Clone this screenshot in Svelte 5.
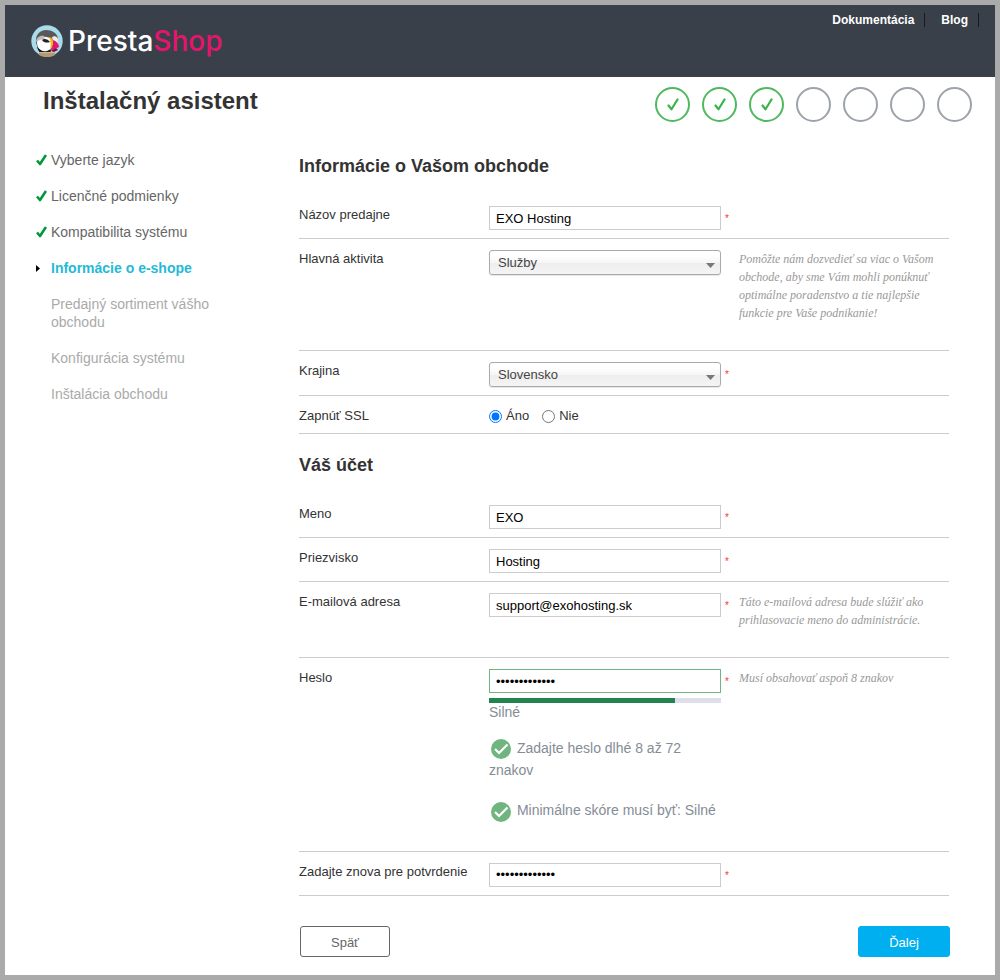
<script>
  const steps = [
    { label: 'Vyberte jazyk', state: 'done' },
    { label: 'Licenčné podmienky', state: 'done' },
    { label: 'Kompatibilita systému', state: 'done' },
    { label: 'Informácie o e-shope', state: 'current' },
    { label: 'Predajný sortiment vášho obchodu', state: 'todo' },
    { label: 'Konfigurácia systému', state: 'todo' },
    { label: 'Inštalácia obchodu', state: 'todo' }
  ];
  const rules = ['Zadajte heslo dlhé 8 až 72 znakov', 'Minimálne skóre musí byť: Silné'];

  let shop = $state('EXO Hosting');
  let ssl = $state('yes');
  let first = $state('EXO');
  let last = $state('Hosting');
  let email = $state('support@exohosting.sk');
  let password = $state('exohosting123');
  let confirmation = $state('exohosting123');
  let strength = $state(80);
</script>

{#snippet dropdown(id, value)}
  <div class="select">
    <select {id}><option>{value}</option></select>
    <svg width="9" height="5" viewBox="0 0 9 5" aria-hidden="true"><path d="M0 0h9L4.500 5z" fill="#777" /></svg>
  </div>
{/snippet}

<div class="page">
  <header>
    <a class="logo" href="#home">
      <svg width="32" height="32" viewBox="0 0 32 32" aria-hidden="true">
        <circle cx="16" cy="16" r="15.700" fill="#a9dbea" />
        <path d="M5 18C4 10 9 5 15 5c6 0 11 3 12 8l-4 6-4 9H9z" fill="#595959" />
        <path d="M6 17c1-4 5-6 9-5 4 0 6 3 6 7 0 5-3 9-7 9-5-1-8-6-8-11z" fill="#fff" />
        <path d="M5 17c0-4 4-7 8-6l1 3c-3 0-6 1-9 3z" fill="#bdbdbd" />
        <path d="M11 15c2-2 6-1 8 2-3 1-6 1-8-2z" fill="#202226" />
        <path d="M6 21c2 4 6 6 10 5l4-2-1 4H10c-2-1-4-4-4-7z" fill="#191b1f" />
        <path d="M21 12c3-2 6 0 6 3l-1 4-4-3z" fill="#ededed" />
        <path d="M18 12c3 0 5 4 4 8l-3 5c1-5 1-9-1-13z" fill="#f7b51c" />
        <path d="M22 15c3 1 6 4 6 7l-8 4c1-3 3-7 2-11z" fill="#e6146c" />
        <path d="M20 26l5-3 2 2-4 2z" fill="#7d1040" />
        <path d="M8 27h16v3c-5 3-11 3-16 0z" fill="#b69a77" />
        <path d="M8 27h16v1H8z" fill="#d0b896" />
      </svg>
      <span>Presta<b>Shop</b></span>
    </a>
    <nav>
      <a href="#docs">Dokumentácia</a>
      <a href="#blog">Blog</a>
    </nav>
  </header>

  <div class="top">
    <h1>Inštalačný asistent</h1>
    <ol class="progress">
      {#each steps as step}
        <li class={step.state}>
          {#if step.state === 'done'}
            <svg width="12" height="13" viewBox="0 0 12 13" aria-hidden="true"><path d="M1.500 7.500l3 3.800L10.500 1.500" fill="none" stroke="#3bb44a" stroke-width="2.200" stroke-linecap="round" stroke-linejoin="round" /></svg>
          {/if}
        </li>
      {/each}
    </ol>
  </div>

  <div class="body">
    <ul class="steps">
      {#each steps as step}
        <li class={step.state}>
          <span class="mark">
            {#if step.state === 'done'}
              <svg width="11" height="12" viewBox="0 0 11 12" aria-hidden="true"><path d="M1 6.500l3 3.500L10 1" fill="none" stroke="#00963a" stroke-width="2.600" stroke-linejoin="round" /></svg>
            {:else if step.state === 'current'}
              <svg width="4" height="7" viewBox="0 0 4 7" aria-hidden="true"><path d="M0 0l4 3.500L0 7z" fill="#000" /></svg>
            {/if}
          </span>
          <span>{step.label}</span>
        </li>
      {/each}
    </ul>

    <form onsubmit={(e) => e.preventDefault()}>
      <h2>Informácie o Vašom obchode</h2>
      <div class="row">
        <label for="shop">Názov predajne</label>
        <input id="shop" type="text" bind:value={shop} />
        <sup>*</sup>
      </div>
      <div class="row">
        <label for="activity">Hlavná aktivita</label>
        {@render dropdown('activity', 'Služby')}
        <sup></sup>
        <p>Pomôžte nám dozvedieť sa viac o Vašom obchode, aby sme Vám mohli ponúknuť optimálne poradenstvo a tie najlepšie funkcie pre Vaše podnikanie!</p>
      </div>
      <div class="row">
        <label for="country">Krajina</label>
        {@render dropdown('country', 'Slovensko')}
        <sup>*</sup>
      </div>
      <div class="row">
        <span id="ssl">Zapnúť SSL</span>
        <div class="radios" role="radiogroup" aria-labelledby="ssl">
          <label><input type="radio" value="yes" bind:group={ssl} />Áno</label>
          <label><input type="radio" value="no" bind:group={ssl} />Nie</label>
        </div>
      </div>

      <h2>Váš účet</h2>
      <div class="row">
        <label for="first">Meno</label>
        <input id="first" type="text" bind:value={first} />
        <sup>*</sup>
      </div>
      <div class="row">
        <label for="last">Priezvisko</label>
        <input id="last" type="text" bind:value={last} />
        <sup>*</sup>
      </div>
      <div class="row">
        <label for="email">E-mailová adresa</label>
        <input id="email" type="text" bind:value={email} />
        <sup>*</sup>
        <p>Táto e-mailová adresa bude slúžiť ako prihlasovacie meno do administrácie.</p>
      </div>
      <div class="row">
        <label for="password">Heslo</label>
        <div class="password">
          <input id="password" class="valid" type="password" bind:value={password} />
          <div class="meter"><div style="width: {strength}%"></div></div>
          <div class="score">Silné</div>
          <ul>
            {#each rules as rule}
              <li>
                <svg width="20" height="20" viewBox="0 0 20 20" aria-hidden="true"><circle cx="10" cy="10" r="10" fill="#70b580" /><path d="M4 10l4 4 8.500-8.500" fill="none" stroke="#fff" stroke-width="2.200" /></svg>
                {rule}
              </li>
            {/each}
          </ul>
        </div>
        <sup>*</sup>
        <p>Musí obsahovať aspoň 8 znakov</p>
      </div>
      <div class="row">
        <label for="confirmation">Zadajte znova pre potvrdenie</label>
        <input id="confirmation" type="password" bind:value={confirmation} />
        <sup>*</sup>
      </div>

      <div class="buttons">
        <button type="button">Späť</button>
        <button type="submit" class="next">Ďalej</button>
      </div>
    </form>
  </div>
</div>

<style>
  :global(body) {
    background: #aaa;
    padding: 5px;
  }
  .page {
    background: #fff;
    color: #333;
    font: 13px/18px "Liberation Sans", Arial, sans-serif;
  }
  .page :global(*) {
    box-sizing: border-box;
  }
  h1, h2, ul, ol, p {
    margin: 0;
    padding: 0;
    list-style: none;
  }
  header {
    display: flex;
    justify-content: space-between;
    align-items: flex-start;
    height: 72px;
    padding: 0 16px 0 26px;
    background: #3a404a;
  }
  a {
    color: #fff;
    text-decoration: none;
  }
  .logo {
    display: flex;
    align-items: center;
    gap: 5px;
    padding-top: 20px;
    font: 500 28px/32px Inter, sans-serif;
  }
  .logo b {
    color: #e6146c;
    font-weight: 500;
  }
  nav {
    display: flex;
    gap: 16px;
    padding-top: 8px;
    font-size: 12px;
    line-height: 14px;
    font-weight: 700;
  }
  nav a {
    padding-right: 10px;
    border-right: 1px solid #16191e;
  }
  .top {
    display: flex;
    justify-content: space-between;
    height: 58px;
    padding: 10px 23px 0 38px;
  }
  h1 {
    font-size: 24px;
    line-height: 28px;
  }
  .progress {
    display: flex;
    gap: 12px;
  }
  .progress li {
    display: flex;
    align-items: center;
    justify-content: center;
    width: 35px;
    height: 35px;
    border: 2px solid #9da2ab;
    border-radius: 50%;
  }
  .progress .done {
    border-color: #50b95d;
  }
  .body {
    display: flex;
    justify-content: space-between;
    gap: 68px;
    padding: 0 46px 18px 31px;
  }
  .steps {
    display: flex;
    flex-direction: column;
    gap: 18px;
    width: 195px;
    padding-top: 16px;
    font-size: 14px;
  }
  .steps li {
    display: flex;
    color: #aaa;
  }
  .steps .done {
    color: #666;
  }
  .steps .current {
    color: #25b9d7;
    font-weight: 700;
  }
  .mark {
    display: flex;
    align-items: center;
    flex: 0 0 15px;
    height: 18px;
  }
  form {
    flex: 1;
  }
  h2 {
    padding: 19px 0 17px;
    font-size: 18px;
    line-height: 24px;
  }
  .row {
    display: grid;
    grid-template-columns: 190px 232px 18px 1fr;
    align-items: start;
    padding: 11px 0 8px;
    border-bottom: 1px solid #ccc;
  }
  input[type='text'], input[type='password'] {
    display: block;
    width: 100%;
    height: 24px;
    margin: 0;
    padding: 0 6px;
    border: 1px solid #ccc;
    border-radius: 0;
    background: #fff;
    color: #000;
    font: inherit;
  }
  input.valid {
    border-color: #70b580;
  }
  sup {
    padding: 4px 0 0 4px;
    color: #f33;
    font-size: 10px;
    line-height: 18px;
    vertical-align: baseline;
  }
  p {
    margin-bottom: 20px;
    color: #999;
    font: italic 12px/18px Georgia, "Liberation Serif", serif;
  }
  .select {
    position: relative;
  }
  select {
    appearance: none;
    display: block;
    width: 100%;
    height: 25px;
    padding: 1px 24px 0 8px;
    border: 1px solid #aaa;
    border-radius: 3px;
    background: linear-gradient(#fff 20%, #f6f6f6 50%, #eee 52%, #f4f4f4);
    box-shadow: 0 1px 1px rgba(0, 0, 0, 0.1);
    color: #444;
    font: inherit;
  }
  .select svg {
    position: absolute;
    right: 6px;
    top: 13px;
    pointer-events: none;
  }
  .radios {
    display: flex;
    gap: 13px;
  }
  .radios label {
    display: flex;
    align-items: center;
    gap: 4px;
  }
  .radios input {
    width: 13px;
    height: 13px;
    margin: 0;
  }
  .meter {
    height: 5px;
    margin-top: 5px;
    background: #dfdfea;
  }
  .meter div {
    height: 100%;
    background: #21834d;
  }
  .score, .password li {
    color: #858c96;
    font-size: 14px;
  }
  .password ul {
    display: flex;
    flex-direction: column;
    gap: 18px;
    padding: 16px 0 21px;
  }
  .password li {
    line-height: 22px;
  }
  .password svg {
    margin: 0 2px;
    vertical-align: middle;
  }
  .buttons {
    display: flex;
    justify-content: space-between;
    margin-right: -1px;
    padding: 30px 0 0 1px;
  }
  button {
    width: 90px;
    height: 31px;
    padding: 3px 0 0;
    border: 1px solid #666;
    border-radius: 3px;
    background: #fff;
    color: #666;
    font: inherit;
  }
  .next {
    width: 92px;
    border-color: #00aff0;
    background: #00aff0;
    color: #fff;
  }
</style>
